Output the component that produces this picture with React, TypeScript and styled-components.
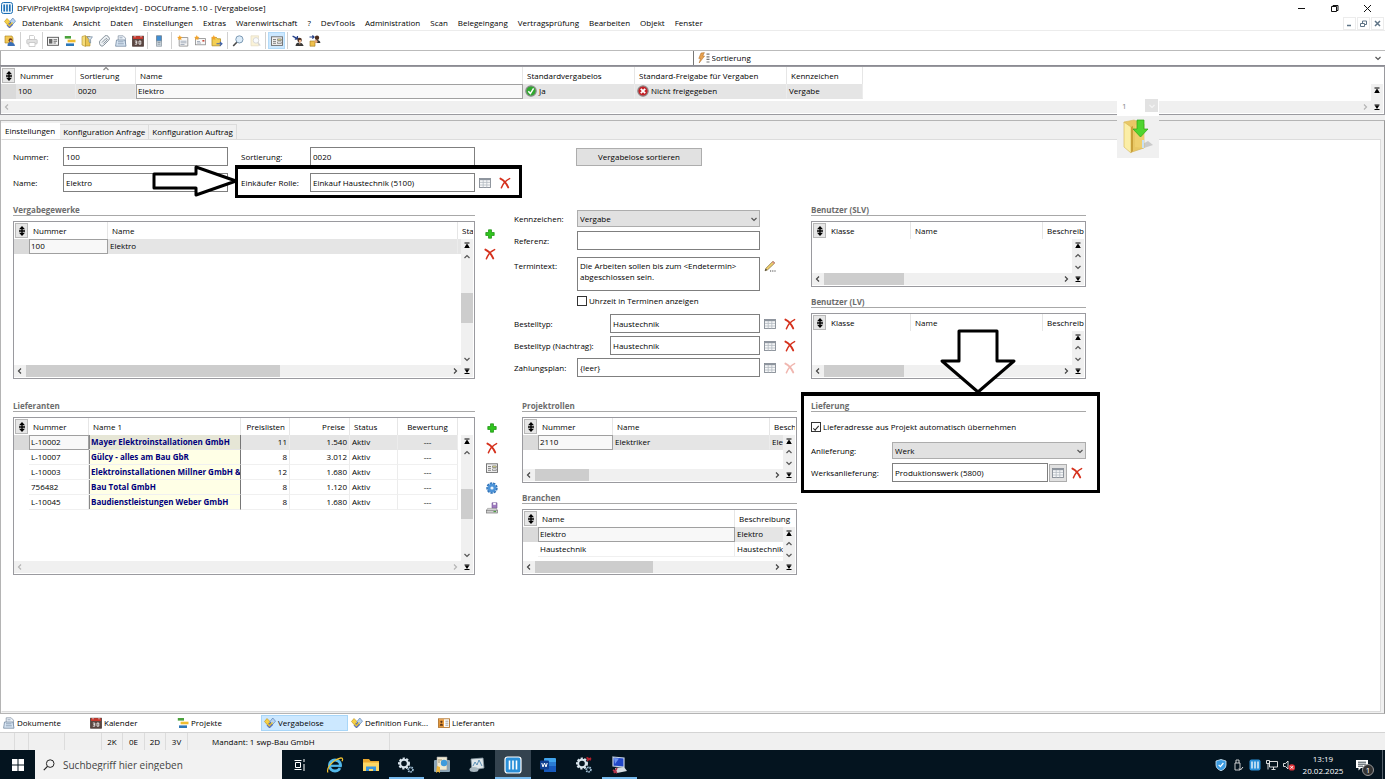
import React from "react";
import styled, { createGlobalStyle, css } from "styled-components";

const GlobalStyle = createGlobalStyle`
  *, *::before, *::after { box-sizing: border-box; }
  html, body { margin: 0; padding: 0; background: #fff; }
  body, button, input, select, textarea, table {
    font-family: "Open Sans", "Noto Sans", sans-serif;
    font-size: 8px;
    line-height: 12px;
    color: #000;
  }
  button { padding: 0; margin: 0; border: 0; background: none; }
  svg { display: block; flex: none; }
`;

const Screen = styled.div`
  display: flex;
  flex-direction: column;
  min-height: 100vh;
  overflow: hidden;
  background: #fff;
`;

/* ---------- icons ---------- */

type IconProps = { size?: number; dim?: boolean };

const Svg = ({ size = 12, dim, box = 12, children }: IconProps & { box?: number; children: React.ReactNode }) => (
  <svg width={size} height={size} viewBox={`0 0 ${box} ${box}`} opacity={dim ? 0.35 : 1} aria-hidden="true">
    {children}
  </svg>
);

const AppIcon = ({ size = 12 }: IconProps) => (
  <Svg size={size}>
    <rect x="0.5" y="0.5" width="11" height="11" rx="2" fill="#e8f3fb" stroke="#1c6fb5" />
    <path d="M3.2 2.5v7M6 2.5v7M8.8 2.5v7" stroke="#1c6fb5" strokeWidth="1.6" />
  </Svg>
);

const LotIcon = ({ size = 12 }: IconProps) => (
  <Svg size={size}>
    <path d="M0.5 4.5 3 1.5l3 3-2.5 3.5z" fill="#f7d046" stroke="#b98d18" strokeWidth="0.6" />
    <path d="M6 4.5 8.8 1l2.7 3.2-3.5 4z" fill="#b9d3ee" stroke="#4a76ad" strokeWidth="0.6" />
    <path d="M3 8.5 6.5 5.5 8.5 8l-3 3z" fill="#5b6fc4" stroke="#324f9a" strokeWidth="0.6" />
    <path d="M3.5 7l1.8 1.8L8.5 5.5" fill="none" stroke="#e8c32e" strokeWidth="1.3" />
  </Svg>
);

const UserCardIcon = () => (
  <Svg>
    <path d="M1 1h7l1 2v5H1z" fill="#f3c955" stroke="#a87f1d" strokeWidth="0.6" />
    <circle cx="6.5" cy="5.2" r="1.9" fill="#6b3a1e" />
    <path d="M3.5 11c0-3 1.2-4 3-4s4 1 4.5 4z" fill="#3b6fb6" />
    <circle cx="6.8" cy="6" r="1.1" fill="#efb58d" />
  </Svg>
);

const PrinterIcon = ({ dim }: IconProps) => (
  <Svg dim={dim}>
    <path d="M3.5 4.5v-4h4l1 1v3" fill="#fff" stroke="#555" strokeWidth="0.8" />
    <rect x="0.8" y="4.5" width="10.4" height="4.4" rx="0.8" fill="#aaa" stroke="#555" strokeWidth="0.8" />
    <path d="M3 7.5h6v4H3z" fill="#fff" stroke="#555" strokeWidth="0.8" />
  </Svg>
);

const AddressIcon = () => (
  <Svg>
    <rect x="0.5" y="2.3" width="11" height="8" fill="#f4f4f4" stroke="#555" strokeWidth="0.9" />
    <rect x="2" y="4" width="3.4" height="4.6" fill="#666" />
    <path d="M6.5 4.7h3.6M6.5 6.3h3.6M6.5 8h2.4" stroke="#555" strokeWidth="0.8" />
  </Svg>
);

const GanttIcon = ({ size = 12 }: IconProps) => (
  <Svg size={size}>
    <rect x="0.8" y="1" width="6.2" height="2.6" fill="#4aa23c" />
    <rect x="3.6" y="4.7" width="7.9" height="2.6" fill="#f0bd2f" />
    <rect x="2" y="8.4" width="8" height="2.6" fill="#2d77b8" />
  </Svg>
);

const FolderFilterIcon = () => (
  <Svg>
    <path d="M1 1.5 4.5.5V11.5L1 10z" fill="#f6dd7c" stroke="#b08d26" strokeWidth="0.6" />
    <path d="M4.5 1.5H9V11H4.5z" fill="#e9c552" stroke="#b08d26" strokeWidth="0.6" />
    <path d="M6 1.8h5.4L9.6 4.5v3.5L8.1 7V4.5z" fill="#dfe8f2" stroke="#5a7590" strokeWidth="0.6" />
  </Svg>
);

const ClipIcon = () => (
  <Svg>
    <path d="M1.5 8.5 1.6 6.2 6.6 1.2a2.3 2.3 0 0 1 3.4 0l.6.8a2.3 2.3 0 0 1 0 3.4L5.6 10.4a2.2 2.2 0 0 1-3.2 0z" fill="#eef2f5" stroke="#6d7b86" strokeWidth="0.8" />
    <path d="M4 7.5 7.7 3.8a.9.9 0 0 1 1.3 1.3L5.4 8.7" fill="none" stroke="#6d7b86" strokeWidth="0.8" />
  </Svg>
);

const DocsIcon = ({ size = 12 }: IconProps) => (
  <Svg size={size}>
    <path d="M3.2.8h5l2.3 2.4v6H3.2z" fill="#eef4fa" stroke="#8b98a8" strokeWidth="0.8" />
    <path d="M1.5 5h8.5l1 6.2H.6z" fill="#d8e6f4" stroke="#7388a0" strokeWidth="0.8" />
    <path d="M4.5 2.8h3M3 6.8h5.5M2.8 8.8h6" stroke="#7388a0" strokeWidth="0.7" />
  </Svg>
);

const CalendarIcon = ({ size = 12 }: IconProps) => (
  <Svg size={size}>
    <rect x="0.6" y="1.2" width="10.8" height="10" fill="#5a4641" stroke="#4a3834" strokeWidth="0.8" />
    <rect x="1" y="1.2" width="10" height="2.8" fill="#c9372c" />
    <path d="M3 0.4v2M9 0.4v2" stroke="#ddd" strokeWidth="0.9" />
    <path d="M2.8 6h2v1.5H3.4M4.8 7.5V9.2H2.8M7 6h1.8v3.2H7z" fill="none" stroke="#fff" strokeWidth="0.8" />
  </Svg>
);

const PhoneIcon = () => (
  <Svg>
    <rect x="3.6" y="0.8" width="4.8" height="5.4" fill="#3f8fd6" stroke="#6a7c8c" strokeWidth="0.8" />
    <rect x="3.6" y="6" width="4.8" height="5.2" fill="#cfd8df" stroke="#8f9ba5" strokeWidth="0.8" />
    <path d="M4.6 7.5h2.8M4.6 9.2h2.8" stroke="#6a7883" strokeWidth="0.6" />
  </Svg>
);

const STAR = "M2.8 0l.8 1.7 1.9.2-1.4 1.3.4 1.9-1.7-.9-1.7.9.4-1.9L.1 1.9l1.9-.2z";

const NewDocIcon = () => (
  <Svg>
    <path d="M2.2 2.5h8.6v8.6H2.2z" fill="#f8f8f8" stroke="#8a8a8a" strokeWidth="0.8" />
    <path d="M3.5 6.2h6M3.5 7.8h6M3.5 9.5h4" stroke="#8794a6" strokeWidth="0.7" />
    <path d={STAR} fill="#f2a32a" />
  </Svg>
);

const NewMailIcon = () => (
  <Svg>
    <rect x="1.4" y="3.6" width="10" height="6.2" fill="#f8f8f8" stroke="#8a8a8a" strokeWidth="0.8" />
    <path d="M8.4 5h2v1.6h-2z" fill="#c94a3c" />
    <path d="M3 8h4M3 6.5h3" stroke="#8794a6" strokeWidth="0.7" />
    <path d={STAR} fill="#f2a32a" />
  </Svg>
);

const NewFolderIcon = () => (
  <Svg>
    <path d="M1 2.5h4.5l1 1.3h3v7H1z" fill="#f4cf52" stroke="#b08d26" strokeWidth="0.8" />
    <path d="M5.5 8.8h5M8.8 6.8l2.2 2-2.2 2" fill="none" stroke="#3d61ad" strokeWidth="1.1" />
    <path d={STAR} fill="#f2a32a" />
  </Svg>
);

const MagnifierIcon = () => (
  <Svg>
    <circle cx="7.4" cy="4.4" r="3.6" fill="#dcecf9" stroke="#7d9ab4" />
    <path d="M4.8 7.2 1.2 11" stroke="#4a4a4a" strokeWidth="1.6" />
  </Svg>
);

const FindDocIcon = () => (
  <Svg dim>
    <path d="M2 .8h7.5v10H2z" fill="#f3dc8f" stroke="#b29a53" strokeWidth="0.7" />
    <circle cx="7" cy="5.4" r="2.8" fill="#eef5fb" stroke="#8a8a8a" strokeWidth="0.9" />
    <path d="M8.8 7.5 11.2 10.6" stroke="#8a8a8a" strokeWidth="1.3" />
  </Svg>
);

const FormIcon = () => (
  <Svg>
    <rect x="0.5" y="1.8" width="11" height="8.6" fill="#f1f1f1" stroke="#6a6a6a" strokeWidth="0.9" />
    <path d="M2 4.5h3M2 6.4h3M2 8.3h3" stroke="#666" strokeWidth="0.8" />
    <path d="M6.5 3.9h3.8v1.6H6.5z" fill="#e6e08a" stroke="#666" strokeWidth="0.6" />
    <path d="M6.5 6.9h3.8v1.6H6.5z" fill="#fff" stroke="#666" strokeWidth="0.6" />
  </Svg>
);

const PersonInIcon = () => (
  <Svg>
    <path d="M.6 1.2 5 3.4M5.4 1l.2 2.8-2.8.3" fill="none" stroke="#243f87" strokeWidth="1.3" />
    <circle cx="7.6" cy="5" r="2.2" fill="#4d2e1e" />
    <circle cx="8" cy="6" r="1.2" fill="#f0b890" />
    <path d="M3.5 11c.3-2.5 1.6-3.5 3.5-3.5s4 1 4.6 3.5z" fill="#373737" />
    <path d="M7 7.5h1.5L8 10z" fill="#f0b890" />
  </Svg>
);

const PeopleInIcon = () => (
  <Svg>
    <path d="M.5 2h4.2M3.4.5l1.6 1.5-1.6 1.6" fill="none" stroke="#243f87" strokeWidth="1.2" />
    <circle cx="8" cy="2.8" r="2.2" fill="#4d2e1e" />
    <path d="M5.4 8c0-2.3 1-3 2.7-3s3 .8 3.3 3z" fill="#2f2f2f" />
    <path d="M1 6h5v5.2H1z" fill="#f0c14c" stroke="#9b761c" strokeWidth="0.6" />
    <circle cx="7" cy="6.5" r="1.6" fill="#e8a878" />
  </Svg>
);

const BoltListIcon = () => (
  <Svg>
    <path d="M3 1 6.4.6 4.8 4h1.8L1.2 11l1.3-4.6H.8z" fill="#e7a14f" stroke="#ad6a25" strokeWidth="0.5" />
    <path d="M8.5 2.2h3M8.5 4.8h3M8.5 7.4h3M8.5 10h3" stroke="#777" strokeWidth="1.2" />
  </Svg>
);

const OkIcon = () => (
  <Svg>
    <circle cx="6" cy="6" r="5.2" fill="#2fa82e" stroke="#8d8d8d" strokeWidth="1.2" />
    <path d="M3.3 6.2 5.4 8.6 8.6 3.4" fill="none" stroke="#fff" strokeWidth="1.5" />
  </Svg>
);

const NoIcon = () => (
  <Svg>
    <circle cx="6" cy="6" r="5.2" fill="#c32126" stroke="#8d8d8d" strokeWidth="1.2" />
    <path d="M3.8 3.8l4.4 4.4M8.2 3.8 3.8 8.2" stroke="#fff" strokeWidth="1.8" />
  </Svg>
);

const TableIcon = () => (
  <Svg>
    <rect x="0.5" y="1.5" width="11" height="9" fill="#f7f8f9" stroke="#858c94" strokeWidth="0.9" />
    <path d="M1 2.5h10" stroke="#8d959e" strokeWidth="1.4" />
    <path d="M1 5.4h10M1 8h10M4.2 3v7.5M7.8 3v7.5" stroke="#b4bac1" strokeWidth="0.8" />
  </Svg>
);

const CrossIcon = ({ dim }: IconProps) => (
  <Svg dim={dim}>
    <path d="M1.4 1.6C4.500 3 7.500 6.500 9.200 10.400" fill="none" stroke="#d5301c" strokeWidth="1.900" strokeLinecap="round" />
    <path d="M10.600 1.600C7.500 3 3.800 7 2.400 10.800" fill="none" stroke="#d5301c" strokeWidth="1.500" strokeLinecap="round" />
  </Svg>
);

const PlusIcon = () => (
  <Svg>
    <path d="M4.5 1.8h3v2.7h2.7v3H7.5v2.7h-3V7.5H1.8v-3h2.7z" fill="#2fc51d" stroke="#178c0d" strokeWidth="0.7" />
  </Svg>
);

const GearIcon = () => (
  <Svg>
    <circle cx="6" cy="6" r="4.8" fill="none" stroke="#2f72b8" strokeWidth="1.8" strokeDasharray="2.4 0.9" />
    <circle cx="6" cy="6" r="4.4" fill="#4b93d8" />
    <circle cx="6" cy="6" r="1.6" fill="#e9f3fc" />
  </Svg>
);

const SavePrintIcon = () => (
  <Svg>
    <path d="M6 .8h5v5.4H6z" fill="#a07cc0" stroke="#6f4f91" strokeWidth="0.6" />
    <path d="M7.2 1h2.6v1.8H7.2z" fill="#fff" />
    <path d="M1.6 6.4h8.6l1.2 2H.5z" fill="#e9e9e9" stroke="#888" strokeWidth="0.6" />
    <rect x="0.5" y="8.2" width="11" height="2.8" fill="#cfcfcf" stroke="#777" strokeWidth="0.7" />
    <path d="M7.5 9.6h2.5" stroke="#3f9a35" strokeWidth="1" />
  </Svg>
);

const PencilIcon = () => (
  <Svg>
    <path d="M1 10.8 2 8.2 9 1.2 10.8 3 3.6 9.8z" fill="#f0cf6b" stroke="#7e6a3a" strokeWidth="0.7" />
    <path d="M9 1.2 10.8 3 9.8 4 8 2.2z" fill="#d98a8a" />
    <path d="M1 10.8l.8-2 1.3 1.2z" fill="#333" />
    <path d="M6 11h1.2M8.2 11h1.2M10.4 11h1.2" stroke="#444" />
  </Svg>
);

const CardIcon = () => (
  <Svg>
    <rect x="0.5" y="1.8" width="11" height="8.6" fill="#fff" stroke="#b0732b" strokeWidth="0.9" />
    <rect x="1" y="2.2" width="5" height="7.8" fill="#e79a3d" />
    <circle cx="3.4" cy="4.8" r="1.1" fill="#5a3316" />
    <path d="M1.8 8.8c0-2.6 3.2-2.6 3.2 0z" fill="#5a3316" />
    <path d="M7.4 4.2h3M7.4 6.2h3M7.4 8.2h3" stroke="#777" strokeWidth="0.7" />
  </Svg>
);

const Chevron = ({ dir = "down", color = "#555" }: { dir?: "up" | "down" | "left" | "right"; color?: string }) => {
  const d = {
    up: "M1.5 5 4 2.5 6.5 5",
    down: "M1.5 3 4 5.5 6.5 3",
    left: "M5 1.5 2.5 4 5 6.5",
    right: "M3 1.5 5.5 4 3 6.5",
  }[dir];
  return (
    <svg width="8" height="8" viewBox="0 0 8 8" aria-hidden="true">
      <path d={d} fill="none" stroke={color} strokeWidth="1.2" />
    </svg>
  );
};

const EdgeIcon = ({ dir }: { dir: "up" | "down" }) => (
  <svg width="8" height="8" viewBox="0 0 8 8" aria-hidden="true">
    <path d="M1.5 2h5M1.5 6.5h5" stroke="#000" />
    <path d={dir === "up" ? "M4 2.5 6 5.500V6H2V5.500z" : "M4 6 6 3V2.500H2V3z"} fill="#000" />
  </svg>
);

const MoveIcon = () => (
  <svg width="8" height="12" viewBox="0 0 8 12" aria-hidden="true">
    <path d="M4 1 7 4.200H1zM4 11 7 7.800H1z" fill="#000" />
    <path d="M4 3v6M1 6h6" stroke="#000" strokeWidth="1.300" />
  </svg>
);

/* ---------- title, menu, toolbar ---------- */

const TitleBar = styled.header`
  display: flex;
  align-items: center;
  height: 16px;
  padding: 0 9px 0 1px;
  gap: 4px;
`;
const Title = styled.h1`
  flex: 1;
  margin: 0;
  font-size: 8px;
  font-weight: 400;
`;
const WindowButtons = styled.div`
  display: flex;
  gap: 15px;
`;
const WindowButton = styled.button`
  display: grid;
  place-items: center;
  width: 18px;
  height: 14px;
`;

const MenuBar = styled.nav`
  display: flex;
  align-items: center;
  height: 15px;
  padding: 0 1px 0 4px;
  border-bottom: 1px solid #ececec;
`;
const MenuItems = styled.div`
  display: flex;
  flex: 1;
  gap: 10px;
  padding-left: 6px;
`;
const MenuItem = styled.button`
  white-space: nowrap;
`;
const ChildButtons = styled.div`
  display: flex;
  gap: 1px;
`;
const ChildButton = styled.button`
  display: grid;
  place-items: center;
  width: 13px;
  height: 13px;
  border: 1px solid #ececec;
`;

const ToolBar = styled.div`
  display: flex;
  align-items: center;
  height: 19px;
  padding-left: 1px;
`;
const ToolGroup = styled.div<{ $width: number }>`
  display: flex;
  width: ${(p) => p.$width}px;
`;
const ToolButton = styled.button<{ $active?: boolean }>`
  display: grid;
  flex: 1;
  place-items: center;
  height: 17px;
  ${(p) => p.$active && css`background: #cce8ff; box-shadow: inset 0 0 0 1px #b2daf8;`}
`;
const ToolSep = styled.span<{ $gap?: number }>`
  width: 1px;
  height: 17px;
  margin: 0 ${(p) => p.$gap ?? 3}px;
  background: #d0d0d0;
`;

const FilterBar = styled.div`
  display: grid;
  grid-template-columns: 1fr 1fr;
  height: 16px;
  border-top: 1px solid #bbb;
  border-bottom: 1px solid #8b8b93;
`;
const FilterInput = styled.input`
  min-width: 0;
  border: 0;
  border-left: 1px solid #aaa;
  outline: 0;
`;
const FilterSelectBox = styled.div`
  display: flex;
  align-items: center;
  gap: 2px;
  padding: 0 3px 0 4px;
  border-left: 1px solid #777;
`;
const PlainSelect = styled.select`
  flex: 1;
  min-width: 0;
  padding: 0;
  border: 0;
  outline: 0;
  background: none;
  appearance: none;
`;

/* ---------- data grid ---------- */

type Align = "left" | "right" | "center";
type Column = { label: string; width: number; align?: Align; strong?: boolean; sorted?: boolean };

const GridFrame = styled.div<{ $height: number }>`
  display: grid;
  grid-template-columns: minmax(0, 1fr) 12px;
  grid-template-rows: minmax(0, 1fr) 12px;
  height: ${(p) => p.$height}px;
  padding: 0 1px 1px 0;
  border: 1px solid #9a9a9f;
  background: #fff;
`;
const GridClip = styled.div`
  grid-area: 1 / 1 / 2 / 3;
  overflow: hidden;
`;
const Table = styled.table<{ $width: number }>`
  width: ${(p) => p.$width}px;
  table-layout: fixed;
  border-collapse: separate;
  border-spacing: 0;
`;
const HeadCell = styled.th<{ $align?: Align }>`
  position: relative;
  height: 17px;
  padding: 0 4px;
  border-right: 1px solid #e6e6e6;
  font-weight: 400;
  text-align: ${(p) => p.$align ?? "left"};
  white-space: nowrap;
  overflow: hidden;
`;
const SortMark = styled.span`
  position: absolute;
  top: -2px;
  left: 26px;
`;
const CornerCell = styled.th`
  height: 17px;
  padding: 1px;
`;
const CornerButton = styled.button`
  display: grid;
  place-items: center;
  width: 100%;
  height: 15px;
  border: 1px solid #b8b8b8;
  background: #e6e6e6;
`;
const RowMark = styled.td<{ $selected: boolean }>`
  padding: 0;
  background: ${(p) => (p.$selected ? "#dadada" : "transparent")};
`;
const Cell = styled.td<{ $align?: Align; $selected: boolean; $focus: boolean; $strong?: boolean }>`
  height: 15px;
  padding: 0 2px;
  border-right: 1px solid #ececec;
  border-bottom: 1px solid ${(p) => (p.$selected ? "#e5e5e5" : "#f0f0f0")};
  background: ${(p) => (p.$selected ? "#e5e5e5" : "#fff")};
  text-align: ${(p) => p.$align ?? "left"};
  white-space: nowrap;
  overflow: hidden;
  ${(p) =>
    p.$strong &&
    css`
      background: ${p.$selected ? "#e6e6d6" : "#ffffe6"};
      border-right-color: #777;
      color: #00007c;
      font-weight: 700;
      box-shadow: inset 1px 0 0 #888;
    `}
  ${(p) =>
    p.$focus &&
    css`
      background: #f8f8f8;
      border-color: #a0a0a0;
      box-shadow: inset 1px 1px 0 #a0a0a0;
    `}
`;
const CellFlow = styled.span`
  display: flex;
  align-items: center;
  gap: 2px;
`;

const Rail = styled.div`
  grid-area: 1 / 2;
  z-index: 1;
  display: flex;
  flex-direction: column;
  margin-top: 17px;
  background: #f0f0f0;
`;
const RailTrack = styled.div`
  flex: 1;
  min-height: 0;
  padding-top: 30px;
`;
const ShortTrack = styled.div`
  flex: 1;
`;
const RailThumb = styled.div`
  height: 30px;
  background: #cdcdcd;
`;
const ScrollButton = styled.button`
  display: grid;
  place-items: center;
  width: 12px;
  min-height: 0;
  height: 12px;
  background: #f0f0f0;
`;
const HBar = styled.div`
  display: flex;
  grid-area: 2 / 1;
  background: #f0f0f0;
`;
const HTrack = styled.div`
  flex: 1;
`;
const HThumb = styled.div<{ $percent: number }>`
  width: ${(p) => p.$percent}%;
  height: 12px;
  background: #cdcdcd;
`;

type DataGridProps = {
  label: string;
  columns: Column[];
  rows: React.ReactNode[][];
  height: number;
  focusColumn?: number;
  thumb?: number;
  rail?: "long" | "short" | "none";
};

const DataGrid = ({ label, columns, rows, height, focusColumn = 0, thumb, rail = "short" }: DataGridProps) => {
  const arrow = thumb ? "#444" : "#b5b5b5";
  return (
    <GridFrame $height={height}>
      <GridClip>
        <Table $width={columns.reduce((sum, c) => sum + c.width, 15)} aria-label={label}>
          <colgroup>
            <col style={{ width: 15 }} />
            {columns.map((c) => (
              <col key={c.label} style={{ width: c.width }} />
            ))}
          </colgroup>
          <thead>
            <tr>
              <CornerCell>
                <CornerButton aria-label="Spalten anordnen">
                  <MoveIcon />
                </CornerButton>
              </CornerCell>
              {columns.map((c) => (
                <HeadCell key={c.label} $align={c.align} scope="col">
                  {c.sorted && (
                    <SortMark>
                      <Chevron dir="up" color="#888" />
                    </SortMark>
                  )}
                  {c.label}
                </HeadCell>
              ))}
            </tr>
          </thead>
          <tbody>
            {rows.map((row, r) => (
              <tr key={r}>
                <RowMark $selected={r === 0} />
                {row.map((value, c) => (
                  <Cell
                    key={c}
                    $align={columns[c].align}
                    $strong={columns[c].strong}
                    $selected={r === 0}
                    $focus={r === 0 && c === focusColumn}
                  >
                    {value}
                  </Cell>
                ))}
              </tr>
            ))}
          </tbody>
        </Table>
      </GridClip>
      <Rail>
        <ScrollButton aria-label="Zum Anfang">
          <EdgeIcon dir="up" />
        </ScrollButton>
        {rail !== "none" && (
          <>
            <ScrollButton aria-label="Nach oben">
              <Chevron dir="up" />
            </ScrollButton>
            {rail === "long" ? (
              <RailTrack>
                <RailThumb />
              </RailTrack>
            ) : (
              <ShortTrack />
            )}
            <ScrollButton aria-label="Nach unten">
              <Chevron dir="down" />
            </ScrollButton>
          </>
        )}
      </Rail>
      <HBar>
        <ScrollButton aria-label="Nach links">
          <Chevron dir="left" color={arrow} />
        </ScrollButton>
        <HTrack>{thumb ? <HThumb $percent={thumb} /> : null}</HTrack>
        <ScrollButton aria-label="Nach rechts">
          <Chevron dir="right" color={arrow} />
        </ScrollButton>
      </HBar>
      <ScrollButton aria-label="Zum Ende">
        <EdgeIcon dir="down" />
      </ScrollButton>
    </GridFrame>
  );
};

/* ---------- form parts ---------- */

const Workspace = styled.main`
  position: relative;
  display: flex;
  flex: 1;
  flex-direction: column;
  padding-top: 5px;
  background: #f0f0f0;
`;
const TabPanel = styled.section`
  display: flex;
  flex: 1;
  flex-direction: column;
  padding: 2px 3px 1px 0;
  border: 1px solid #b4b4b4;
  border-right-color: #999;
`;
const TabStrip = styled.div`
  display: flex;
  align-items: flex-end;
  height: 16px;
`;
const Tab = styled.button<{ $active?: boolean }>`
  height: 15px;
  padding: 0 3px;
  border: 1px solid #dcdcdc;
  border-width: 1px 1px 0 0;
  white-space: nowrap;
  ${(p) => p.$active && css`height: 16px; padding: 0 4px 2px; border-color: #fff; background: #fff;`}
`;
const Page = styled.div`
  position: relative;
  flex: 1;
  padding: 7px 11px 20px;
  border: 1px solid #dcdcdc;
  border-left-color: #fff;
  background: #fff;
`;
const TopForm = styled.form`
  display: flex;
  align-items: flex-start;
  height: 58px;
`;
const TopFields = styled.div`
  display: grid;
  grid-template-columns: 50px 165px 82px 165px 47px;
  row-gap: 7px;
  align-items: center;
`;
const Label = styled.label<{ $inset?: boolean }>`
  padding-left: ${(p) => (p.$inset ? 13 : 0)}px;
  white-space: nowrap;
`;
const TextInput = styled.input`
  width: 100%;
  min-width: 0;
  height: 19px;
  padding: 0 2px 1px;
  border: 1px solid #7f7f7f;
  background: #fff;
  outline: 0;
`;
const TextArea = styled.textarea`
  display: block;
  width: 100%;
  height: 34px;
  padding: 2px;
  border: 1px solid #7f7f7f;
  line-height: 11px;
  resize: none;
  outline: 0;
  overflow: hidden;
`;
const SelectBox = styled.div`
  position: relative;
`;
const Select = styled.select`
  display: block;
  width: 100%;
  height: 17px;
  padding: 0 2px;
  border: 1px solid #adadad;
  border-radius: 0;
  background: #e1e1e1;
  appearance: none;
  outline: 0;
`;
const SelectMark = styled.span`
  position: absolute;
  top: 5px;
  right: 2px;
  pointer-events: none;
`;
const PushButton = styled.button`
  width: 126px;
  height: 18px;
  margin: 1px 0 0 54px;
  border: 1px solid #adadad;
  background: #e1e1e1;
`;
const IconButton = styled.button<{ $framed?: boolean }>`
  display: grid;
  place-items: center;
  width: 12px;
  height: 12px;
  ${(p) => p.$framed && css`width: 18px; height: 18px; border: 1px solid #adadad; background: #e1e1e1;`}
`;
const FieldIcons = styled.div<{ $tight?: boolean }>`
  display: flex;
  align-items: center;
  gap: ${(p) => (p.$tight ? 4 : 8)}px;
  padding-left: ${(p) => (p.$tight ? 1 : 4)}px;
`;

const Board = styled.div`
  display: grid;
  grid-template-columns: 462px 39px 283px 275px;
  row-gap: 22px;
`;
const SideTools = styled.div<{ $top: number; $left: number }>`
  display: flex;
  flex-direction: column;
  gap: 8px;
  padding: ${(p) => p.$top}px 0 0 ${(p) => p.$left}px;
`;
const Stack = styled.div<{ $inset?: boolean }>`
  display: flex;
  flex-direction: column;
  gap: 10px;
  padding-left: ${(p) => (p.$inset ? 8 : 0)}px;
`;
const RightStack = styled(Stack)`
  margin-left: 14px;
  margin-right: -14px;
`;
const GroupTitle = styled.h2`
  height: 11px;
  margin: 0 0 5px;
  border-bottom: 1px solid #a8a8a8;
  color: #6c6c6c;
  font-size: 8px;
  line-height: 10px;
  font-weight: 700;
`;
const Group = ({ title, children }: { title: string; children: React.ReactNode }) => (
  <section>
    <GroupTitle>{title}</GroupTitle>
    {children}
  </section>
);

const MiddleForm = styled.form`
  display: flex;
  flex-direction: column;
  gap: 7px;
  padding-top: 5px;
`;
const FieldBlock = styled.div<{ $gap: number }>`
  display: flex;
  flex-direction: column;
  gap: ${(p) => p.$gap}px;
`;
const FieldRow = styled.div<{ $label: number; $control: number; $top?: boolean }>`
  display: grid;
  grid-template-columns: ${(p) => p.$label}px ${(p) => p.$control}px 1fr;
  align-items: ${(p) => (p.$top ? "start" : "center")};
  & > ${Label}, & > ${FieldIcons} {
    padding-top: ${(p) => (p.$top ? 3 : 0)}px;
  }
`;
const CheckRow = styled.label<{ $inset?: boolean }>`
  display: flex;
  align-items: center;
  gap: 2px;
  height: 12px;
  padding-left: ${(p) => (p.$inset ? 63 : 0)}px;
`;
const CheckBox = styled.input`
  display: grid;
  place-items: center;
  width: 10px;
  height: 10px;
  margin: 0;
  border: 1px solid #333;
  background: #fff;
  appearance: none;
  &:checked::after {
    content: "";
    width: 6px;
    height: 3px;
    border: solid #222;
    border-width: 0 0 1px 1px;
    transform: rotate(-50deg);
  }
`;
const DeliveryForm = styled.form`
  display: flex;
  flex-direction: column;
  gap: 4px;
  padding-top: 4px;
`;
const DeliveryCheck = styled.div`
  padding-bottom: 5px;
`;

/* ---------- annotations over the form ---------- */

const Highlight = styled.div<{ $x: number; $y: number; $w: number; $h: number }>`
  position: absolute;
  left: ${(p) => p.$x}px;
  top: ${(p) => p.$y}px;
  width: ${(p) => p.$w}px;
  height: ${(p) => p.$h}px;
  border: 3px solid #000;
  border-top-width: 4px;
  pointer-events: none;
`;
const ArrowBox = styled.div<{ $x: number; $y: number }>`
  position: absolute;
  left: ${(p) => p.$x}px;
  top: ${(p) => p.$y}px;
  pointer-events: none;
`;

const FolderPalette = styled.aside`
  position: absolute;
  top: -20px;
  left: 1117px;
  width: 42px;
  background: #f0f0f0;
`;
const PaletteHead = styled.div`
  display: flex;
  align-items: center;
  justify-content: space-between;
  height: 21px;
  padding: 0 1px 0 5px;
  background: #fff;
  color: #888;
`;
const PaletteClose = styled.button`
  display: grid;
  place-items: center;
  width: 13px;
  height: 13px;
  background: #e2e2e2;
`;
const PaletteBody = styled.button`
  display: grid;
  place-items: center;
  width: 100%;
  height: 42px;
`;

/* ---------- bottom bars ---------- */

const DocTabs = styled.nav`
  display: flex;
  height: 19px;
  padding: 1px 0;
  border-bottom: 1px solid #d4d4d4;
`;
const DocTab = styled.button<{ $active?: boolean }>`
  display: flex;
  align-items: center;
  gap: 2px;
  width: 87px;
  padding-left: 3px;
  white-space: nowrap;
  ${(p) => p.$active && css`background: #cce8ff; box-shadow: inset 0 0 0 1px #a8d6f8;`}
`;
const StatusBar = styled.footer`
  display: flex;
  height: 17px;
  background: #f0f0f0;
`;
const StatusCell = styled.span<{ $width: number; $wide?: boolean }>`
  width: ${(p) => p.$width}px;
  padding-left: ${(p) => (p.$wide ? 24 : 0)}px;
  border-right: 1px solid #dcdcdc;
  line-height: 17px;
  text-align: ${(p) => (p.$wide ? "left" : "center")};
  white-space: nowrap;
`;

const TaskBar = styled.div`
  display: flex;
  height: 29px;
  background: #04141f;
  color: #fff;
`;
const StartButton = styled.button`
  display: grid;
  place-items: center;
  width: 35px;
`;
const SearchBox = styled.label`
  display: flex;
  align-items: center;
  gap: 8px;
  width: 247px;
  padding-left: 8px;
  background: #f2f2f2;
`;
const SearchInput = styled.input`
  flex: 1;
  min-width: 0;
  padding: 0;
  border: 0;
  outline: 0;
  background: none;
  font-size: 10px;
  &::placeholder { color: #444; opacity: 1; }
`;
const TaskIcons = styled.div`
  display: flex;
  width: 355px;
`;
const TaskButton = styled.button<{ $open?: boolean; $active?: boolean }>`
  display: grid;
  flex: 1;
  place-items: center;
  background: ${(p) => (p.$active ? "#34434f" : "none")};
  box-shadow: ${(p) => (p.$open ? "inset 0 -2px 0 #76b9ed" : "none")};
`;
const Tray = styled.div`
  display: flex;
  align-items: center;
  gap: 5px;
  margin-left: auto;
  padding-right: 2px;
`;
const Clock = styled.time`
  width: 46px;
  margin-right: 5px;
  color: #fff;
  text-align: center;
`;
const Notice = styled.button`
  position: relative;
  margin-right: 9px;
`;
const NoticeCount = styled.span`
  position: absolute;
  top: 5px;
  left: 6px;
  width: 12px;
  height: 12px;
  border: 1px solid #999;
  border-radius: 6px;
  background: #333;
  color: #fff;
  line-height: 10px;
`;
const DesktopEdge = styled.span`
  align-self: stretch;
  width: 1px;
  background: #55616b;
`;

const TaskSvg = ({ children, size = 18 }: { children: React.ReactNode; size?: number }) => (
  <Svg size={size} box={18}>{children}</Svg>
);

const Gears = ({ accent }: { accent: string }) => (
  <TaskSvg>
    <circle cx="7" cy="7.5" r="5" fill="none" stroke="#d9e4ec" strokeWidth="2" strokeDasharray="2.2 1.4" />
    <circle cx="7" cy="7.5" r="3.8" fill="none" stroke="#d9e4ec" strokeWidth="2" />
    <circle cx="13.6" cy="13.6" r="2.3" fill="none" stroke="#a9c8de" strokeWidth="1.8" strokeDasharray="1.4 0.7" />
    <path d="M11.5 1.5l4.5 2.5M12 4.5l4-2.5" stroke={accent} strokeWidth="1.8" />
  </TaskSvg>
);

const menuItems = [
  "Datenbank", "Ansicht", "Daten", "Einstellungen", "Extras", "Warenwirtschaft", "?", "DevTools",
  "Administration", "Scan", "Belegeingang", "Vertragsprüfung", "Bearbeiten", "Objekt", "Fenster",
];

const suppliers = [
  ["L-10002", "Mayer Elektroinstallationen GmbH", "11", "1.540", "Aktiv", "---"],
  ["L-10007", "Gülcy - alles am Bau GbR", "8", "3.012", "Aktiv", "---"],
  ["L-10003", "Elektroinstallationen Millner GmbH & Co. KG", "12", "1.680", "Aktiv", "---"],
  ["756482", "Bau Total GmbH", "8", "1.120", "Aktiv", "---"],
  ["L-10045", "Baudienstleistungen Weber GmbH", "8", "1.680", "Aktiv", "---"],
];

const userColumns: Column[] = [
  { label: "Klasse", width: 84 },
  { label: "Name", width: 132 },
  { label: "Beschreibung", width: 80 },
];

const Lookup = ({ of, framed }: { of: string; framed?: boolean }) => (
  <IconButton type="button" $framed={framed} aria-label={`${of} auswählen`}>
    <TableIcon />
  </IconButton>
);
const Clear = ({ of, dim }: { of: string; dim?: boolean }) => (
  <IconButton type="button" aria-label={`${of} entfernen`}>
    <CrossIcon dim={dim} />
  </IconButton>
);

const TopArea = () => (
  <TopForm>
    <TopFields>
      <Label htmlFor="nummer">Nummer:</Label>
      <TextInput id="nummer" defaultValue="100" />
      <Label htmlFor="sortierung" $inset>Sortierung:</Label>
      <TextInput id="sortierung" defaultValue="0020" />
      <span />
      <Label htmlFor="name">Name:</Label>
      <TextInput id="name" defaultValue="Elektro" />
      <Label htmlFor="rolle" $inset>Einkäufer Rolle:</Label>
      <TextInput id="rolle" defaultValue="Einkauf Haustechnik (5100)" />
      <FieldIcons>
        <Lookup of="Einkäufer Rolle" />
        <Clear of="Einkäufer Rolle" />
      </FieldIcons>
    </TopFields>
    <PushButton type="button">Vergabelose sortieren</PushButton>
  </TopForm>
);

const MiddleFields = () => (
  <MiddleForm>
    <FieldBlock $gap={4}>
      <FieldRow $label={63} $control={183}>
        <Label htmlFor="kennzeichen">Kennzeichen:</Label>
        <SelectBox>
          <Select id="kennzeichen"><option>Vergabe</option></Select>
          <SelectMark><Chevron /></SelectMark>
        </SelectBox>
      </FieldRow>
      <FieldRow $label={63} $control={183}>
        <Label htmlFor="referenz">Referenz:</Label>
        <TextInput id="referenz" />
      </FieldRow>
    </FieldBlock>
    <FieldBlock $gap={4}>
      <FieldRow $label={63} $control={183} $top>
        <Label htmlFor="termintext">Termintext:</Label>
        <TextArea id="termintext" defaultValue={"Die Arbeiten sollen bis zum <Endetermin>\nabgeschlossen sein."} />
        <FieldIcons>
          <IconButton type="button" aria-label="Termintext bearbeiten"><PencilIcon /></IconButton>
        </FieldIcons>
      </FieldRow>
      <CheckRow $inset>
        <CheckBox type="checkbox" />
        Uhrzeit in Terminen anzeigen
      </CheckRow>
    </FieldBlock>
    <FieldBlock $gap={3}>
      <FieldRow $label={96} $control={150}>
        <Label htmlFor="bestelltyp">Bestelltyp:</Label>
        <TextInput id="bestelltyp" defaultValue="Haustechnik" />
        <FieldIcons><Lookup of="Bestelltyp" /><Clear of="Bestelltyp" /></FieldIcons>
      </FieldRow>
      <FieldRow $label={96} $control={150}>
        <Label htmlFor="nachtrag">Bestelltyp (Nachtrag):</Label>
        <TextInput id="nachtrag" defaultValue="Haustechnik" />
        <FieldIcons><Lookup of="Bestelltyp (Nachtrag)" /><Clear of="Bestelltyp (Nachtrag)" /></FieldIcons>
      </FieldRow>
      <FieldRow $label={63} $control={183}>
        <Label htmlFor="zahlungsplan">Zahlungsplan:</Label>
        <TextInput id="zahlungsplan" defaultValue="{leer}" />
        <FieldIcons><Lookup of="Zahlungsplan" /><Clear of="Zahlungsplan" dim /></FieldIcons>
      </FieldRow>
    </FieldBlock>
  </MiddleForm>
);

const Delivery = () => (
  <Group title="Lieferung">
    <DeliveryForm>
      <DeliveryCheck>
        <CheckRow>
          <CheckBox type="checkbox" defaultChecked />
          Lieferadresse aus Projekt automatisch übernehmen
        </CheckRow>
      </DeliveryCheck>
      <FieldRow $label={81} $control={194}>
        <Label htmlFor="anlieferung">Anlieferung:</Label>
        <SelectBox>
          <Select id="anlieferung"><option>Werk</option></Select>
          <SelectMark><Chevron /></SelectMark>
        </SelectBox>
      </FieldRow>
      <FieldRow $label={81} $control={156}>
        <Label htmlFor="werk">Werksanlieferung:</Label>
        <TextInput id="werk" defaultValue="Produktionswerk (5800)" />
        <FieldIcons $tight><Lookup of="Werksanlieferung" framed /><Clear of="Werksanlieferung" /></FieldIcons>
      </FieldRow>
    </DeliveryForm>
  </Group>
);

const FolderDownload = () => (
  <svg width="32" height="36" viewBox="0 0 32 36" aria-hidden="true">
    <path d="M10 33 31 26l-5-4-14 8z" fill="#b0b0b0" opacity="0.6" />
    <path d="M2 3 12 1l10 4v24l-12 4z" fill="#e9c765" stroke="#d9b95a" strokeWidth="0.6" />
    <path d="M13 6l9-2v25l-9-1z" fill="#efcf6e" />
    <path d="M2 3 9 8v26L2 28z" fill="#fbeea6" stroke="#d5b452" strokeWidth="0.6" />
    <path d="M9 8l2-1v25l-2 2z" fill="#c99f3a" />
    <path d="M20 21h2v8h-2z" fill="#c9e0f2" />
    <path d="M15 1h7v9h4l-7.5 8L11 10h4z" fill="#4fd52f" stroke="#2ba514" strokeWidth="0.7" />
  </svg>
);

export default function App() {
  return (
    <Screen>
      <GlobalStyle />
      <TitleBar>
        <AppIcon />
        <Title>DFViProjektR4 [swpviprojektdev] - DOCUframe 5.10 - [Vergabelose]</Title>
        <WindowButtons>
          <WindowButton aria-label="Minimieren">
            <svg width="9" height="9" viewBox="0 0 9 9"><path d="M1 4.5h7" stroke="#111" /></svg>
          </WindowButton>
          <WindowButton aria-label="Wiederherstellen">
            <svg width="9" height="9" viewBox="0 0 9 9">
              <path d="M1.5 2.5h5v5h-5zM3 2.5v-1h5v5H6.5" fill="none" stroke="#111" />
            </svg>
          </WindowButton>
          <WindowButton aria-label="Schließen">
            <svg width="9" height="9" viewBox="0 0 9 9"><path d="M1 1l7 7M8 1 1 8" stroke="#111" /></svg>
          </WindowButton>
        </WindowButtons>
      </TitleBar>

      <MenuBar>
        <LotIcon />
        <MenuItems>
          {menuItems.map((m) => (
            <MenuItem key={m}>{m}</MenuItem>
          ))}
        </MenuItems>
        <ChildButtons>
          <ChildButton aria-label="Fenster minimieren">
            <svg width="7" height="7" viewBox="0 0 7 7"><path d="M1 5.5h4" stroke="#5f7486" strokeWidth="1.5" /></svg>
          </ChildButton>
          <ChildButton aria-label="Fenster wiederherstellen">
            <svg width="7" height="7" viewBox="0 0 7 7">
              <path d="M.5 3.5h4v3h-4zM2.5 3V1h4v3.5H5" fill="none" stroke="#5f7486" />
            </svg>
          </ChildButton>
          <ChildButton aria-label="Fenster schließen">
            <svg width="7" height="7" viewBox="0 0 7 7"><path d="M1 1l5 5M6 1 1 6" stroke="#5f7486" strokeWidth="1.5" /></svg>
          </ChildButton>
        </ChildButtons>
      </MenuBar>

      <ToolBar>
        <ToolGroup $width={17}><ToolButton aria-label="Benutzer"><UserCardIcon /></ToolButton></ToolGroup>
        <ToolSep $gap={2} />
        <ToolGroup $width={17}><ToolButton aria-label="Drucken"><PrinterIcon dim /></ToolButton></ToolGroup>
        <ToolSep $gap={2} />
        <ToolGroup $width={101}>
          <ToolButton aria-label="Adressen"><AddressIcon /></ToolButton>
          <ToolButton aria-label="Projekte"><GanttIcon /></ToolButton>
          <ToolButton aria-label="Ordner"><FolderFilterIcon /></ToolButton>
          <ToolButton aria-label="Anlagen"><ClipIcon /></ToolButton>
          <ToolButton aria-label="Dokumente"><DocsIcon /></ToolButton>
          <ToolButton aria-label="Kalender"><CalendarIcon /></ToolButton>
        </ToolGroup>
        <ToolSep $gap={1} />
        <ToolGroup $width={19}><ToolButton aria-label="Telefon"><PhoneIcon /></ToolButton></ToolGroup>
        <ToolSep />
        <ToolGroup $width={50}>
          <ToolButton aria-label="Neues Dokument"><NewDocIcon /></ToolButton>
          <ToolButton aria-label="Neue Nachricht"><NewMailIcon /></ToolButton>
          <ToolButton aria-label="Neuer Ordner"><NewFolderIcon /></ToolButton>
        </ToolGroup>
        <ToolSep $gap={2} />
        <ToolGroup $width={33}>
          <ToolButton aria-label="Suchen"><MagnifierIcon /></ToolButton>
          <ToolButton aria-label="Im Dokument suchen"><FindDocIcon /></ToolButton>
        </ToolGroup>
        <ToolSep $gap={2} />
        <ToolGroup $width={17}><ToolButton $active aria-label="Formular"><FormIcon /></ToolButton></ToolGroup>
        <ToolSep $gap={2} />
        <ToolGroup $width={33}>
          <ToolButton aria-label="Person zuordnen"><PersonInIcon /></ToolButton>
          <ToolButton aria-label="Personen zuordnen"><PeopleInIcon /></ToolButton>
        </ToolGroup>
      </ToolBar>

      <FilterBar>
        <FilterInput aria-label="Filter" />
        <FilterSelectBox>
          <BoltListIcon />
          <PlainSelect aria-label="Sortierung"><option>Sortierung</option></PlainSelect>
          <Chevron />
        </FilterSelectBox>
      </FilterBar>

      <DataGrid
        label="Vergabelose"
        height={49}
        rail="none"
        focusColumn={2}
        columns={[
          { label: "Nummer", width: 60 },
          { label: "Sortierung", width: 60, sorted: true },
          { label: "Name", width: 387 },
          { label: "Standardvergabelos", width: 112 },
          { label: "Standard-Freigabe für Vergaben", width: 152 },
          { label: "Kennzeichen", width: 76 },
        ]}
        rows={[[
          "100", "0020", "Elektro",
          <CellFlow key="ja"><OkIcon />Ja</CellFlow>,
          <CellFlow key="nein"><NoIcon />Nicht freigegeben</CellFlow>,
          "Vergabe",
        ]]}
      />

      <Workspace>
        <TabPanel>
          <TabStrip>
            <Tab $active>Einstellungen</Tab>
            <Tab>Konfiguration Anfrage</Tab>
            <Tab>Konfiguration Auftrag</Tab>
          </TabStrip>
          <Page>
            <TopArea />
            <Board>
              <Group title="Vergabegewerke">
                <DataGrid
                  label="Vergabegewerke"
                  height={158}
                  rail="long"
                  thumb={60}
                  columns={[
                    { label: "Nummer", width: 79 },
                    { label: "Name", width: 350 },
                    { label: "Standard", width: 60 },
                  ]}
                  rows={[["100", "Elektro", ""]]}
                />
              </Group>
              <SideTools $top={23} $left={9}>
                <IconButton aria-label="Gewerk hinzufügen"><PlusIcon /></IconButton>
                <Clear of="Gewerk" />
              </SideTools>
              <MiddleFields />
              <RightStack>
                <Group title="Benutzer (SLV)">
                  <DataGrid label="Benutzer (SLV)" height={66} thumb={34} columns={userColumns} rows={[]} />
                </Group>
                <Group title="Benutzer (LV)">
                  <DataGrid label="Benutzer (LV)" height={66} thumb={34} columns={userColumns} rows={[]} />
                </Group>
              </RightStack>

              <Group title="Lieferanten">
                <DataGrid
                  label="Lieferanten"
                  height={158}
                  rail="long"
                  columns={[
                    { label: "Nummer", width: 60 },
                    { label: "Name 1", width: 152, strong: true },
                    { label: "Preislisten", width: 49, align: "right" },
                    { label: "Preise", width: 60, align: "right" },
                    { label: "Status", width: 48 },
                    { label: "Bewertung", width: 60, align: "center" },
                  ]}
                  rows={suppliers}
                />
              </Group>
              <SideTools $top={21} $left={11}>
                <IconButton aria-label="Lieferant hinzufügen"><PlusIcon /></IconButton>
                <Clear of="Lieferant" />
                <IconButton aria-label="Formular öffnen"><FormIcon /></IconButton>
                <IconButton aria-label="Einstellungen"><GearIcon /></IconButton>
                <IconButton aria-label="Speichern und drucken"><SavePrintIcon /></IconButton>
              </SideTools>
              <Stack $inset>
                <Group title="Projektrollen">
                  <DataGrid
                    label="Projektrollen"
                    height={66}
                    thumb={23}
                    columns={[
                      { label: "Nummer", width: 75 },
                      { label: "Name", width: 157 },
                      { label: "Beschreibung", width: 80 },
                    ]}
                    rows={[["2110", "Elektriker", "Elektriker"]]}
                  />
                </Group>
                <Group title="Branchen">
                  <DataGrid
                    label="Branchen"
                    height={66}
                    thumb={50}
                    columns={[
                      { label: "Name", width: 197 },
                      { label: "Beschreibung", width: 80 },
                    ]}
                    rows={[["Elektro", "Elektro"], ["Haustechnik", "Haustechnik"]]}
                  />
                </Group>
              </Stack>
              <RightStack>
                <Delivery />
              </RightStack>
            </Board>

            <Highlight $x={233} $y={25} $w={287} $h={33} />
            <ArrowBox $x={150} $y={24}>
              <svg width="86" height="34" viewBox="0 0 86 34">
                <path d="M2 10h42V3l40 14-40 14v-7H2z" fill="#fff" stroke="#000" strokeWidth="3" strokeLinejoin="round" />
              </svg>
            </ArrowBox>
            <Highlight $x={799} $y={252} $w={299} $h={101} />
            <ArrowBox $x={937} $y={189}>
              <svg width="78" height="66" viewBox="0 0 78 66">
                <path d="M20 2h38v30h17L39 63 3 32h17z" fill="#fff" stroke="#000" strokeWidth="3" strokeLinejoin="round" />
              </svg>
            </ArrowBox>
          </Page>
        </TabPanel>

        <FolderPalette>
          <PaletteHead>
            1
            <PaletteClose aria-label="Schließen">
              <Chevron color="#f4f4f4" />
            </PaletteClose>
          </PaletteHead>
          <PaletteBody aria-label="Ordner ablegen"><FolderDownload /></PaletteBody>
        </FolderPalette>
      </Workspace>

      <DocTabs>
        <DocTab><DocsIcon />Dokumente</DocTab>
        <DocTab><CalendarIcon />Kalender</DocTab>
        <DocTab><GanttIcon />Projekte</DocTab>
        <DocTab $active><LotIcon />Vergabelose</DocTab>
        <DocTab><LotIcon />Definition Funk...</DocTab>
        <DocTab><CardIcon />Lieferanten</DocTab>
      </DocTabs>

      <StatusBar>
        <StatusCell $width={15} />
        <StatusCell $width={14} />
        <StatusCell $width={36} />
        <StatusCell $width={37} />
        <StatusCell $width={21}>2K</StatusCell>
        <StatusCell $width={22}>0E</StatusCell>
        <StatusCell $width={21}>2D</StatusCell>
        <StatusCell $width={22}>3V</StatusCell>
        <StatusCell $width={202} $wide>Mandant: 1 swp-Bau GmbH</StatusCell>
      </StatusBar>

      <TaskBar>
        <StartButton aria-label="Start">
          <svg width="12" height="12" viewBox="0 0 12 12">
            <path d="M0 0h5.5v5.5H0zM6.5 0H12v5.5H6.5zM0 6.5h5.5V12H0zM6.5 6.5H12V12H6.5z" fill="#fff" />
          </svg>
        </StartButton>
        <SearchBox>
          <svg width="12" height="12" viewBox="0 0 12 12">
            <circle cx="7.2" cy="4.6" r="3.8" fill="none" stroke="#222" />
            <path d="M4.5 7.4.8 11.2" stroke="#222" strokeWidth="1.2" />
          </svg>
          <SearchInput aria-label="Suche" placeholder="Suchbegriff hier eingeben" />
        </SearchBox>
        <TaskIcons>
          <TaskButton aria-label="Taskansicht">
            <svg width="12" height="12" viewBox="0 0 12 12">
              <path d="M.5 1.5h7M.5 10.5h7M1.5 3.5h5v5h-5zM10 0v3M10 5v7" fill="none" stroke="#fff" />
            </svg>
          </TaskButton>
          <TaskButton aria-label="Internet Explorer">
            <TaskSvg>
              <circle cx="9" cy="9.5" r="5.5" fill="none" stroke="#52b9ea" strokeWidth="3" />
              <path d="M5 9.8h10" stroke="#52b9ea" strokeWidth="2.2" />
              <path d="M11.5 11.2h6v2.4z" fill="#04141f" />
              <path d="M2 16.500C0 13 6 4 15 1.800c2.500 0 1.500 2.500 1 3.500" fill="none" stroke="#f2c230" strokeWidth="1.200" />
            </TaskSvg>
          </TaskButton>
          <TaskButton aria-label="Explorer">
            <TaskSvg>
              <path d="M1 3h6l1.5 2H17v10H1z" fill="#e9a72e" />
              <path d="M1 6.5h16V15H1z" fill="#fcd765" />
              <path d="M4 15v-4.5h10V15h-3v-2H7v2z" fill="#3a96dd" />
            </TaskSvg>
          </TaskButton>
          <TaskButton $open aria-label="Dienste"><Gears accent="none" /></TaskButton>
          <TaskButton aria-label="Zertifikate">
            <TaskSvg>
              <rect x="1" y="4" width="16" height="12" rx="1" fill="#8ba6b8" />
              <path d="M4 1h10v13H4z" fill="#f1ead2" stroke="#999" strokeWidth="0.6" />
              <circle cx="11" cy="7" r="3.2" fill="#3e9bdc" />
              <path d="M4 10l3 1v6l-2-1.5L3 17z" fill="#efb73b" />
              <path d="M5 4h4M5 6h2" stroke="#8a8260" strokeWidth="0.8" />
            </TaskSvg>
          </TaskButton>
          <TaskButton aria-label="Leistungsmonitor">
            <TaskSvg>
              <path d="M3 3l12-1 1 10-12 2z" fill="#dfe6ea" stroke="#8898a2" strokeWidth="0.8" />
              <path d="M5 10l2-4 2 3 2-5 3 6" fill="none" stroke="#5b8fb5" />
              <ellipse cx="6" cy="13.5" rx="4.5" ry="2.5" fill="#a9b8c0" />
            </TaskSvg>
          </TaskButton>
          <TaskButton $open $active aria-label="DOCUframe">
            <TaskSvg>
              <rect x="1" y="1" width="16" height="16" rx="2.5" fill="#2a8fd8" stroke="#fff" strokeWidth="1.2" />
              <path d="M5.5 4.5v9M9 4.5v9M12.5 4.5v9" stroke="#fff" strokeWidth="1.6" />
            </TaskSvg>
          </TaskButton>
          <TaskButton aria-label="Word">
            <TaskSvg>
              <rect x="5" y="2" width="12" height="14" rx="1" fill="#41a5ee" />
              <path d="M5 6h12v4H5z" fill="#2b7cd3" />
              <path d="M5 10h12v5a1 1 0 0 1-1 1H5z" fill="#185abd" />
              <rect x="1" y="4.5" width="9" height="9" rx="1" fill="#103f91" />
              <path d="M2.8 7l1.2 4 1.5-4L7 11l1.2-4" fill="none" stroke="#fff" />
            </TaskSvg>
          </TaskButton>
          <TaskButton aria-label="Dienststeuerung"><Gears accent="#b3202c" /></TaskButton>
          <TaskButton $open aria-label="Remotedesktop">
            <TaskSvg>
              <path d="M3 1l11 1v9L3 10z" fill="#2146c7" stroke="#c8d4e6" strokeWidth="1.2" />
              <path d="M4 2l5 .5L5 8z" fill="#6d93f0" />
              <path d="M5 12l9-1 3 4-10 2z" fill="#d6dde3" />
              <path d="M3 14l4 3M7 12l-3 5" stroke="#b5344a" strokeWidth="1.6" />
            </TaskSvg>
          </TaskButton>
        </TaskIcons>
        <Tray>
          <Svg>
            <path d="M6 .5 11 2v4c0 3-2.5 4.8-5 5.7C3.5 10.8 1 9 1 6V2z" fill="#3b9be0" stroke="#d5ecfb" strokeWidth="0.8" />
            <path d="M3.6 5.8 5.4 7.6 8.4 4" fill="none" stroke="#fff" strokeWidth="1.2" />
          </Svg>
          <Svg>
            <path d="M3 4h5v7H3zM4 4V1h3v3" fill="none" stroke="#ddd" strokeWidth="0.9" />
            <path d="M7 9.5l1.5 1.5L11 8" fill="none" stroke="#ddd" />
          </Svg>
          <Svg>
            <rect x="0.5" y="0.5" width="11" height="11" rx="2" fill="#2a8fd8" />
            <path d="M3 2.5v7M6 2.5v7M9 2.5v7" stroke="#fff" strokeWidth="1.3" />
          </Svg>
          <Svg>
            <path d="M3.5 2.5h8v5.5h-8zM5.5 10.5h4M7.5 8v2.5M.5 1.5h3v3h-3zM2 4.5v6" fill="none" stroke="#eee" strokeWidth="0.9" />
          </Svg>
          <Svg>
            <path d="M.5 4.5h2L5 2v8L2.5 7.5h-2z" fill="none" stroke="#eee" strokeWidth="0.9" />
            <circle cx="8.8" cy="8.4" r="3.2" fill="#e0353b" />
            <path d="M7.5 7.1l2.6 2.6M10.1 7.1 7.5 9.7" stroke="#fff" />
          </Svg>
          <Clock>
            13:19
            <br />
            20.02.2025
          </Clock>
          <Notice aria-label="Benachrichtigungen">
            <Svg>
              <path d="M0 1h12v8H5l-2.5 2.5V9H0z" fill="#fff" />
              <path d="M2 3.2h8M2 5.2h8M2 7.2h5" stroke="#04141f" strokeWidth="0.8" />
            </Svg>
            <NoticeCount>1</NoticeCount>
          </Notice>
          <DesktopEdge />
        </Tray>
      </TaskBar>
    </Screen>
  );
}
